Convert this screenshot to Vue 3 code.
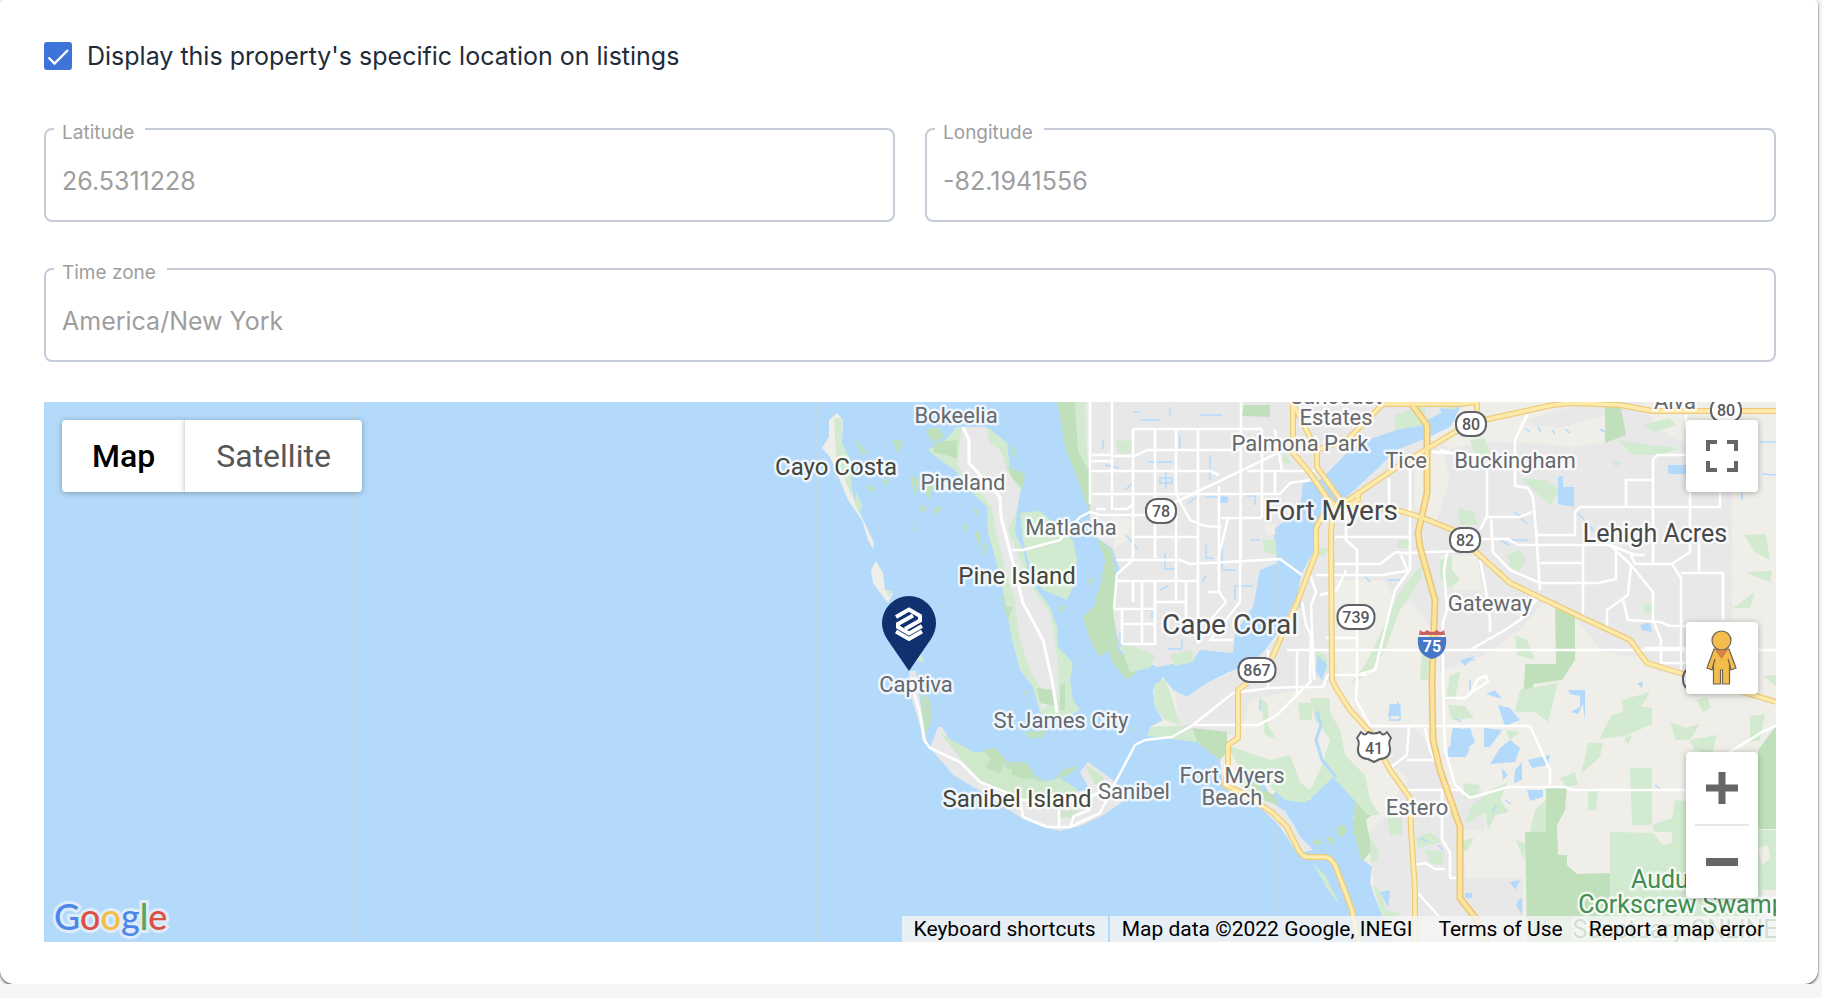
<script setup>
import { ref } from 'vue'

const showLocation = ref(true)
const mapType = ref('map')

const labels = [
  { t: 'Suncoast', x: 1336, y: 404, k: 'town' },
  { t: 'Estates', x: 1336, y: 425, k: 'town' },
  { t: 'Bokeelia', x: 956, y: 423, k: 'town' },
  { t: 'Pineland', x: 963, y: 490, k: 'town' },
  { t: 'Matlacha', x: 1071, y: 535, k: 'town' },
  { t: 'Captiva', x: 916, y: 692, k: 'town' },
  { t: 'St James City', x: 1061, y: 728, k: 'town' },
  { t: 'Sanibel', x: 1134, y: 799, k: 'town' },
  { t: 'Fort Myers', x: 1232, y: 783, k: 'town' },
  { t: 'Beach', x: 1232, y: 805, k: 'town' },
  { t: 'Estero', x: 1417, y: 815, k: 'town' },
  { t: 'Palmona Park', x: 1300, y: 451, k: 'town' },
  { t: 'Tice', x: 1406, y: 468, k: 'town' },
  { t: 'Buckingham', x: 1515, y: 468, k: 'town' },
  { t: 'Gateway', x: 1490, y: 611, k: 'town' },
  { t: 'Alva', x: 1675, y: 409, k: 'town' },
  { t: 'Cayo Costa', x: 836, y: 475, k: 'isle' },
  { t: 'Pine Island', x: 1017, y: 584, k: 'isle' },
  { t: 'Sanibel Island', x: 1017, y: 807, k: 'isle' },
  { t: 'Fort Myers', x: 1331, y: 520, k: 'city' },
  { t: 'Cape Coral', x: 1230, y: 634, k: 'city' },
  { t: 'Lehigh Acres', x: 1655, y: 542, k: 'suburb' },
  { t: 'Audubon', x: 1681, y: 888, k: 'park' },
  { t: 'Corkscrew Swamp', x: 1682, y: 913, k: 'park' },
  { t: 'Sanctuary ONLINE', x: 1675, y: 938, k: 'park' },
]

const shields = [
  { t: '78', x: 1161, y: 511, w: 30 },
  { t: '739', x: 1356, y: 617, w: 37 },
  { t: '867', x: 1257, y: 670, w: 37 },
  { t: '80', x: 1471, y: 424, w: 30 },
  { t: '80', x: 1726, y: 410, w: 30 },
  { t: '82', x: 1465, y: 540, w: 30 },
  { t: '82', x: 1698, y: 679, w: 30 },
]

const highways = [
  'M1293 402V453L1310 473L1327 498L1336 506',
  'M1292 402L1310 437L1317 450V467L1342 502',
  'M1317 450L1347 440L1370 417L1383 404H1460L1477 402V418',
  'M1330 507L1350 499L1397 467L1430 447L1470 423L1553 405L1573 403L1620 405L1653 411H1776',
  'M1345 506L1358 500V492',
  'M1343 505L1397 510L1423 518L1460 533L1477 553L1510 583L1583 618L1630 640L1647 663L1687 675L1776 702',
  'M1335 506L1322 517L1316 528V553L1297 603L1280 640L1272 658M1247 683L1238 690V738L1228 745V767L1225 785L1243 793L1273 813L1287 827L1297 847Q1301 856 1307 857L1325 857Q1333 858 1337 870L1352 910L1355 927L1359 942',
  'M1333 507L1331 533L1332 680L1336 688L1350 710L1370 732L1390 770L1410 798L1411 830L1415 890V942',
]
const interstate = 'M1410 402L1427 425V493L1418 533L1420 547L1435 600L1432 680L1433 740L1440 770L1460 827V898L1477 920L1487 942'

const streets = [
  // Cape Coral grid
  'M1090 402V504M1112 402V510M1133 429V560L1117 574M1155 429V558M1176 429V494L1190 520L1205 526L1221 527M1198 429V644M1155 581V644M1176 516V602M1219 486V592L1226 602L1212 618L1209 634M1241 402V410L1240 602L1210 640H1233',
  'M1133 429H1262M1112 456H1135L1147 450H1240M1092 455H1112M1092 461H1112M1092 471H1210L1219 475M1092 494H1280L1290 483L1310 480M1096 509L1106 509M1114 509H1127L1133 504V494M1133 537H1198M1116 560H1180L1190 564L1280 559L1302 575M1117 581H1198M1155 602H1186M1114 609H1155M1122 624H1155M1122 644H1155V581M1122 609V644M1117 574L1114 609M1133 581V602M1142 581V644M1186 581V624M1247 471H1315M1262 430V494M1275 430L1282 471M1275 471V494M1221 518H1262M1241 518V559M1208 592H1221M1262 494V518M1218 560L1228 518',
  'M1012 550H1023L1060 540L1080 517L1090 512L1100 515H1147L1180 500L1280 452L1317 437',
  // Fort Myers
  'M1346 506V540L1357 550V580M1335 537H1410M1335 564H1380L1396 552L1404 553L1460 551M1316 575H1383L1411 570M1410 465V570M1389 478V505M1357 580V680M1310 575L1316 592L1311 605L1314 680M1302 602L1306 625L1311 635L1310 680M1357 638H1326M1287 650H1776M1320 595L1337 590L1346 570M1401 555L1408 572L1395 590L1385 630L1375 670L1360 674M1432 452L1480 455M1447 553L1444 570L1447 610L1443 622V680L1445 750L1455 785L1470 798',
  'M1193 725H1258L1276 716L1297 695L1312 680M1297 650V695M1268 650V688M1357 680L1356 700L1370 726L1530 726L1550 770V785M1409 727L1407 755L1390 768M1407 760H1434M1425 728L1430 750L1440 770M1444 698H1465L1475 690L1488 682L1486 676L1478 679L1470 695',
  'M1403 790H1460L1470 798L1508 787H1565L1572 790H1690L1730 752L1762 732L1776 726M1442 790V840L1450 852V878H1460M1415 865L1425 863L1435 869H1445M1417 892L1435 912L1450 930',
  // Lehigh Acres
  'M1776 410M1527 415L1515 440V486L1528 488L1533 497L1536 530L1540 590M1487 470V516L1480 530M1487 517H1520L1532 512M1482 539H1508L1518 545H1610L1635 555H1645M1491 519L1493 552L1510 570L1540 583H1598L1616 579V545M1540 563H1583M1537 535H1575V512L1580 507H1720V490M1583 545V618M1626 507V480H1653V460L1657 455H1686M1653 480V564M1690 492V552L1672 564H1635L1630 553M1720 490V507M1610 545L1631 565L1653 592V620L1661 640V663H1686M1631 565L1628 595L1607 610V630M1623 600L1628 620L1660 622L1670 626H1720M1672 564L1681 578V670M1681 573H1723V620M1699 540V573M1645 648H1686V662M1540 595L1520 620L1505 630L1470 650M1480 560L1485 585L1490 620L1490 632M1686 415V430M1460 455L1440 450',
]

const canals = [
  'M1103 440v9M1105 465l14 3M1125 490l8-7M1140 420h20M1160 478h12v5h-12zM1166 471v18M1210 455v25M1148 462h25M1180 435v15M1205 497h16v4M1150 500v9M1188 503l9-6M1126 535l12 14M1133 533v12M1165 553v16h13M1206 545v13h8M1222 545v25h14M1250 540h10M1160 590l8-4M1140 610h12v8M1186 600v12M1206 575l-4 8M1246 496h9v9M1235 600v-14h18M1208 620h8M1120 632v15M1168 649h14v-10M1200 415h22M1170 407v8M1133 412h7',
  'M1365 576l5 6M1388 580h12M1342 625l5-3M1320 670l5-9M1390 705v15h10v-15M1398 702v14M1260 700v11M1370 510l8 7M1300 600v8M1455 718l6 4M1470 680v10M1463 660h12',
  'M1525 428l5 4M1538 427l3 5M1552 430l3 4M1565 429l5 4M1600 429l5 3M1578 513l16 18M1510 540h18M1500 540l9 5M1515 512l12 12M1760 442h16M1742 470v30M1762 474l14 1M1655 785l8 6M1420 838l8 4M1438 845l5 5M1505 800l6 4M1492 812l4-6',
]
</script>

<template>
  <main class="card">
    <label class="toggle">
      <span class="tick">
        <input v-model="showLocation" type="checkbox" />
        <svg v-if="showLocation" viewBox="0 0 28 28" aria-hidden="true">
          <path d="M4.5 15.5L10.5 21.5L24 8" fill="none" stroke="#fff" stroke-width="2.4" />
        </svg>
      </span>
      <span>Display this property's specific location on listings</span>
    </label>

    <div class="fields">
      <div class="field">
        <label for="lat">Latitude</label>
        <input id="lat" type="text" value="26.5311228" disabled />
      </div>
      <div class="field">
        <label for="lng">Longitude</label>
        <input id="lng" type="text" value="-82.1941556" disabled />
      </div>
      <div class="field wide">
        <label for="zone">Time zone</label>
        <input id="zone" type="text" value="America/New York" disabled />
      </div>
    </div>

    <section class="map" aria-label="Map">
      <svg class="canvas" viewBox="44 402 1732 540" preserveAspectRatio="xMidYMid slice">
        <rect x="44" y="402" width="1732" height="540" fill="#b3dafb" />
        <path d="M354.5 402V942M671.5 402V508M816.5 402V942M1276.5 402V942" stroke="#c0daec" fill="none" />

        <!-- mainland -->
        <path fill="#f0eee9" d="M1463 402L1450 427L1427 438L1397 450L1373 473L1347 497L1327 507L1320 523L1313 553L1302 573L1297 597L1280 630L1260 657L1247 665L1227 673L1207 683L1187 697L1173 690L1163 677L1153 690L1155 707L1163 720L1150 727L1148 735L1173 738L1197 742L1220 760L1223 787L1240 797L1260 807L1277 823L1287 837L1297 853L1313 850L1300 837L1293 823L1280 810L1267 800L1280 787L1287 800L1310 800L1320 783L1333 777L1347 790L1357 803L1353 817L1363 833L1360 857L1372 867L1370 883L1377 903L1383 913L1393 942H1776V402Z" />
        <g fill="#e8e8e8">
          <path d="M1064 402L1066 420L1075 450L1083 475L1090 500V520L1097 538L1112 548L1120 570L1112 610L1120 650L1157 667L1193 660L1200 650L1233 653L1235 633L1253 607L1260 570L1277 563L1273 530L1300 510L1303 483L1320 480L1330 470L1347 453L1367 440L1397 430L1427 420L1447 410L1460 402Z" />
          <path d="M1427 438L1400 450L1373 473L1347 497L1327 507L1320 523L1313 553L1302 573L1297 597L1275 640L1250 665L1207 683L1187 697L1176 692L1178 722L1190 730L1240 735L1250 700L1300 690L1340 680L1332 650L1345 585L1385 580L1395 600L1385 625L1410 600L1440 640V672L1485 655L1520 630L1545 600L1590 640L1607 656L1640 656L1660 672L1732 680V498L1735 470L1700 450L1660 430L1640 402H1590L1530 418L1520 430L1500 440L1450 448Z" />
          <path d="M1370 728H1415L1436 755L1445 790L1482 788L1485 830L1460 830L1466 878H1523V942H1393L1377 903L1372 867L1368 835L1385 815L1400 790L1410 780L1385 760L1395 755Z" />
          <path d="M1260 806L1267 800L1285 811L1300 837L1313 850L1297 853L1282 828Z" />
        </g>
        <g fill="#f0eee9">
          <path d="M1460 425L1500 422L1560 428L1605 415V442L1575 447L1530 443L1478 442L1447 450Z" />
          <path d="M1330 580H1385V592L1350 595L1345 650L1330 655Z" />
          <path d="M1113 516L1132 520L1128 540L1114 548ZM1265 525H1275V535H1265ZM1415 450H1442L1450 478L1437 520L1415 510Z" />
          <path d="M1440 555H1477L1482 590L1455 590L1442 580Z" />
          <path d="M1732 430L1776 425V700L1735 690ZM1570 610L1600 650L1640 660L1690 690V730H1440V680L1485 655Z" />
        </g>

        <!-- dense greens -->
        <g fill="#c0e0bc">
          <path d="M1057 402H1075L1078 450L1090 470V515L1078 480L1066 450Z" />
          <path d="M1097 538L1112 550L1116 572L1113 610L1118 650L1137 673L1127 680L1113 663L1100 630L1095 600L1100 587L1105 560Z" />
          <path d="M1100 600L1083 617L1090 640L1100 657L1108 650ZM1244 405H1270V417L1242 416Z" />
          <path d="M1192 728L1227 732V752L1220 760L1197 742ZM1555 600L1575 618V660L1562 680L1525 685V664H1556Z" />
          <path d="M1525 670H1565L1534 676L1532 698H1523ZM1525 832H1546V787H1567L1565 810L1557 825L1558 855H1567V865L1577 874L1610 873V942H1527Z" />
          <path d="M1605 402H1620L1626 435L1605 443ZM1776 726L1758 750V829H1776Z" />
          <path d="M1355 800L1377 810L1366 820L1372 850L1362 862L1353 830ZM1336 828L1344 824L1347 832L1340 838ZM1311 843L1319 838L1322 846ZM1326 836L1334 838L1332 847ZM1240 770L1250 778L1273 795L1280 805L1262 800L1240 785Z" />
        </g>
        <!-- light greens -->
        <g fill="#d2ebd0">
          <path d="M1075 402H1085V420L1088 470L1078 450ZM1118 640L1155 655L1150 668L1130 672ZM1170 655L1192 650L1193 662L1175 666ZM1116 441L1132 440V453L1118 453Z" />
          <path d="M1150 727L1190 725L1197 742L1148 736ZM1154 685L1165 678L1170 692L1180 725L1165 720L1155 707Z" />
          <path d="M1227 745L1270 760L1290 755L1300 782L1310 790L1320 770L1330 740L1315 720L1310 698H1330V712L1340 730L1345 755L1365 775L1370 800L1380 815L1368 815L1345 790L1333 777L1320 790L1305 803L1285 800L1268 785L1240 770Z" />
          <path d="M1260 697L1268 705V725L1277 740L1265 735ZM1298 703H1312V720H1300ZM1285 452L1292 465L1282 462ZM1262 540H1275L1277 555L1265 553ZM1319 548H1329L1325 556H1318Z" />
          <path d="M1397 540V548H1410V540ZM1395 600L1405 585L1425 560L1420 580L1400 610L1385 650L1370 672L1350 685L1365 665L1380 635ZM1315 650L1326 655L1328 670L1320 675ZM1422 650L1430 655L1428 680H1420Z" />
          <path d="M1395 415L1425 405V425L1395 430ZM1440 404L1460 405L1450 412ZM1470 440L1485 438L1490 455H1475ZM1521 478L1545 480L1560 490L1550 505L1535 492ZM1458 508L1474 512L1478 525H1460ZM1507 555L1520 550L1526 560L1518 572L1510 567Z" />
          <path d="M1618 440L1650 445L1680 448L1660 455L1632 455ZM1643 425L1670 418L1676 425L1655 432ZM1612 460L1622 463L1615 467ZM1744 535L1766 534L1770 560L1755 552ZM1745 572L1772 571L1770 582ZM1733 608L1755 592L1750 608ZM1515 635L1527 640L1535 660L1517 655ZM1643 604H1652V613H1644Z" />
          <path d="M1450 675L1460 672L1455 700H1446ZM1448 705L1465 706L1474 718L1452 720ZM1520 690L1558 683L1548 722L1535 712L1515 712ZM1506 730L1520 732L1510 740ZM1622 700L1650 692L1635 718L1625 725ZM1599 739L1612 715L1640 706L1652 708V724L1625 736ZM1588 743H1603L1600 757L1581 774ZM1624 738L1632 735L1628 745ZM1670 722L1685 728L1700 724L1690 740L1676 740ZM1690 740L1717 735L1712 755L1694 750ZM1750 716L1765 714L1760 740L1750 742ZM1696 700L1707 697L1711 708L1703 712ZM1763 676L1776 675V686Z" />
          <path d="M1630 768H1652V825H1632ZM1588 790H1598L1596 810H1588ZM1560 778L1575 772L1578 785L1566 787ZM1610 832L1655 833L1652 825L1672 818L1675 800L1690 802V830H1776V942H1610ZM1535 810L1546 800V832H1530ZM1516 840L1525 843L1524 860ZM1463 783L1480 785L1475 800L1465 798ZM1490 790L1508 782L1500 800L1509 812L1496 815L1488 830L1485 812L1465 825L1470 808Z" />
          <path d="M1387 816L1402 818V835H1390ZM1416 838L1430 832L1442 842L1418 848ZM1425 850L1445 852L1442 865L1430 863ZM1456 842L1474 838L1466 852ZM1373 885L1380 890L1386 910L1400 913L1390 925L1380 910ZM1313 863L1325 875L1340 905L1328 890ZM1371 838L1378 850V862H1370ZM1440 560L1452 555V570L1460 580L1450 588L1440 578Z" />
        </g>
        <path fill="#e8e8e8" d="M1433 553H1440V590H1433Z" />
        <path fill="#f0eee9" d="M1652 832H1672V843L1662 845ZM1758 848L1768 845L1770 858L1762 866ZM1762 890H1776V925H1762Z" />

        <!-- lakes -->
        <g fill="#b3dafb">
          <path d="M1456 410L1440 408L1444 430L1455 420ZM1558 477L1563 476V487H1574V507L1558 504ZM1668 465H1690V474H1668ZM1568 690H1585V722L1583 704L1578 714L1571 712L1580 707V696L1570 694ZM1486 694L1495 690L1502 699ZM1498 705L1510 708L1520 720L1505 726ZM1484 728L1502 730L1490 747H1484ZM1452 730L1470 728L1475 742L1465 750L1450 748ZM1500 748L1510 740L1520 748L1515 762L1490 764ZM1515 770L1522 762V780L1514 783ZM1502 768L1508 775L1503 780ZM1528 760L1550 755L1548 765L1532 768ZM1527 790L1543 790V797L1530 801ZM1448 750L1470 748L1466 757L1450 757ZM1453 728H1460V745H1453ZM1460 660L1475 656L1465 666ZM1640 625L1650 622L1652 632L1642 630ZM1637 684L1643 681L1642 688ZM1510 882L1520 880L1515 890ZM1518 900L1522 898V915L1516 905ZM1465 893H1472V898H1465Z" />
          <path d="M1317 655L1327 665L1322 680L1316 672ZM1390 704H1400V716H1388ZM1448 747H1460V757H1448ZM1235 768L1260 778L1258 785L1240 779ZM1380 892L1390 890L1388 908ZM1257 775L1268 790L1262 792ZM1220 495L1228 497V503L1220 503Z" />
        </g>
        <path d="M1317 712L1321 725L1316 740L1322 760L1336 777" stroke="#b3dafb" stroke-width="3" fill="none" />
        <path v-for="(c, i) in canals" :key="'c' + i" :d="c" fill="none" stroke="#b3dafb" stroke-width="1.5" />

        <!-- islands -->
        <path fill="#f0eee9" d="M837 413L843 420L842 443L847 473L855 503L868 530L874 543L873 549L868 540L862 520L848 500L837 473L830 457L822 448L829 437V420ZM876 561L883 573L885 590L893 593L888 603L873 583L871 570Z" />
        <path fill="#d2ebd0" d="M834 418L842 418L842 443L850 460L852 498L845 480L836 455ZM856 492L862 505L861 512L855 505ZM883 580L886 590L893 591L888 597ZM918 650L925 662L915 660Z" />
        <path fill="#d2ebd0" d="M957 427H987L1007 443L1010 470L1022 472V485L1017 510L1015 533L1023 550L1030 580L1050 607L1057 627L1058 647L1073 663L1070 680L1073 700L1080 710L1060 720L1040 713L1033 687L1020 670L1012 640L1005 600L996 560L988 533L987 507L970 490L955 470L940 460L928 450L945 440Z" />
        <path fill="#e8e8e8" d="M962 427H985L998 442L1007 470L1020 490L1017 510L1008 530L1020 560L1032 588L1048 610L1053 627L1058 665V700L1040 710L1042 690L1030 670L1020 640L1015 600L1005 570L998 540L992 508L975 485L957 465Z" />
        <path fill="#d2ebd0" d="M1020 513L1040 511L1073 540L1077 560L1073 587L1067 600L1043 590L1030 567L1023 540ZM987 430L1007 443V455L990 443Z" />
        <path fill="#c0e0bc" d="M935 442L957 440V458L933 452ZM926 430L938 427L945 437L932 442ZM1007 466L1025 474L1022 488L1012 478ZM1037 688L1054 690V706L1040 703ZM1060 685L1065 684V710H1060Z" />
        <g fill="#bfe0c3">
          <path d="M852 438L868 452L862 455ZM892 440L903 441L898 454ZM882 478L890 480L884 486ZM865 485L876 488L872 493ZM910 475L920 480L915 496ZM922 483L935 485L928 500ZM918 506L927 507L924 514ZM934 508L943 507L935 517ZM912 523L918 533L914 530ZM974 507L980 512L975 517ZM963 525L968 523L965 535ZM975 530L982 535L978 548ZM982 545L987 542L985 558ZM1000 595L1005 600L1002 607ZM1003 605L1013 607L1008 620ZM1010 445L1016 450L1014 460ZM1060 605L1067 608L1058 613ZM1088 580L1095 577L1090 587Z" />
          <path d="M922 695L930 698L932 720L925 735L922 715ZM1022 692L1027 690L1025 697ZM1025 732L1046 730L1042 738H1028ZM984 752L996 748L1007 762L1025 762L1035 775L1050 785L1030 778L1010 776L995 766ZM1052 782L1065 768L1080 766L1068 775ZM1130 730L1135 726L1132 733Z" />
        </g>
        <path fill="#e8e8e8" d="M909 671H916L920 700L926 738L930 748L938 727L942 727L960 758L985 780L1040 795L1090 790L1080 772L1088 762L1110 778L1130 797L1100 817L1080 826L1060 831L1040 826L1020 817L987 795L953 775L925 742L912 700Z" />
        <path fill="#cfe8cb" d="M940 733L973 752L993 752L1007 768L1040 782L1060 778L1078 790L1070 800L1040 803L1000 792L980 780L962 760ZM1085 764L1105 778L1095 785ZM1058 811L1080 810L1070 818L1060 817Z" />
        <path fill="#c0e0bc" d="M982 750L995 748L1006 760L1000 774L986 768L990 758ZM1012 765L1026 763L1034 772L1028 780L1012 775Z" />

        <!-- roads -->
        <g fill="none" stroke="#fff" stroke-width="2.5" stroke-linejoin="round">
          <path v-for="(s, i) in streets" :key="'s' + i" :d="s" />
          <path d="M963 427L969 440V463L1000 497L1001 517L1013 563L1023 603L1043 640L1052 680L1057 713" stroke-width="3" />
          <path d="M913 690L920 713L924 740L930 748L960 762L980 782L1020 798L1023 817L1047 827H1070L1100 813L1115 783L1135 745L1145 740L1172 737L1193 725L1233 693L1270 688L1297 687H1323L1328 675H1367M1059 810V827M1020 800L1085 800L1110 786M1070 827L1074 816L1090 810" />
        </g>
        <g fill="none" stroke-linejoin="round">
          <path v-for="(h, i) in highways" :key="'a' + i" :d="h" stroke="#eecb7c" stroke-width="6" />
          <path :d="interstate" stroke="#ecc477" stroke-width="7" />
          <path v-for="(h, i) in highways" :key="'b' + i" :d="h" stroke="#fdebab" stroke-width="3.5" />
          <path :d="interstate" stroke="#fbe49c" stroke-width="4" />
        </g>

        <!-- route shields -->
        <g v-for="(s, i) in shields" :key="'r' + i">
          <rect :x="s.x - s.w / 2" :y="s.y - 12" :width="s.w" height="24" rx="11" fill="#fff" stroke="#5f6368" stroke-width="2" />
          <text class="route" :x="s.x" :y="s.y + 6">{{ s.t }}</text>
        </g>
        <path fill="#fff" stroke="#5f6368" stroke-width="2" stroke-linejoin="round" d="M1361 732Q1365 737 1368 732Q1374 735 1380 732Q1383 737 1387 732L1391 738Q1388 742 1390 748Q1391 758 1380 759L1374 762L1368 759Q1357 758 1358 748Q1360 742 1357 738Z" />
        <text class="route" x="1374" y="754">41</text>
        <path fill="#c9625e" d="M1419 635L1420 630Q1424 634 1427 630Q1432 634 1437 630Q1440 634 1444 630L1445 635Z" />
        <path fill="#4577c4" d="M1418 637H1446Q1448 655 1432 659Q1416 655 1418 637Z" />
        <text class="route inter" x="1432" y="652">75</text>

        <text v-for="l in labels" :key="l.t + l.y" :class="['place', l.k]" :x="l.x" :y="l.y">{{ l.t }}</text>

        <!-- property marker -->
        <path fill="#10316f" d="M909 671L887 639Q882 631 882 623A27 27 0 0 1 936 623Q936 631 931 639Z" />
        <g fill="none" stroke="#fff" stroke-width="4">
          <path d="M896 617L909 609.5L920 616V620.5L905 629" />
          <path d="M913 615.5L898 624V627L909 633.5L922 626" />
          <path d="M896 631.500L909 639L922 631.500" />
        </g>
      </svg>

      <div class="types">
        <button type="button" :class="{ on: mapType === 'map' }" @click="mapType = 'map'">Map</button>
        <button type="button" :class="{ on: mapType === 'satellite' }" @click="mapType = 'satellite'">Satellite</button>
      </div>

      <button class="tool full" type="button" aria-label="Toggle fullscreen view">
        <svg viewBox="0 0 32 32" width="32" height="32" fill="none" stroke="#666" stroke-width="4">
          <path d="M2 11V2H11M21 2H30V11M30 21V30H21M11 30H2V21" />
        </svg>
      </button>

      <div class="side">
        <button class="tool" type="button" aria-label="Street View">
          <svg viewBox="0 0 32 56" width="32" height="56" fill="#f4bd4b" stroke="#6b6456" stroke-width="1.2">
            <path d="M8 19H23L30 38L25 40L23.5 34V54H16.500V40H14.500V54H7.500V34L6 40L1 38Z" />
            <circle cx="15.500" cy="10.500" r="9.500" />
            <path d="M9 20H22L15.500 29Z" fill="#d58242" stroke="none" />
            <path d="M7.500 34L9 29M23.500 34L22 29" />
          </svg>
        </button>
        <div class="zoom">
          <button type="button" aria-label="Zoom in">
            <svg viewBox="0 0 32 32" width="32" height="32"><path d="M12.500 0H19.500V12.500H32V19.500H19.500V32H12.500V19.500H0V12.500H12.500Z" fill="#666" /></svg>
          </button>
          <button type="button" aria-label="Zoom out">
            <svg viewBox="0 0 32 32" width="32" height="32"><path d="M0 12H32V20H0Z" fill="#666" /></svg>
          </button>
        </div>
      </div>

      <a class="brand" href="#" aria-label="Google"><span class="b">G</span><span class="r">o</span><span class="y">o</span><span class="b">g</span><span class="g">l</span><span class="r">e</span></a>

      <div class="credits">
        <button type="button">Keyboard shortcuts</button>
        <div class="legal">
          <span>Map data ©2022 Google, INEGI</span>
          <a href="#">Terms of Use</a>
          <a href="#">Report a map error</a>
        </div>
      </div>
    </section>
  </main>
</template>

<style>
body {
  margin: 0;
  background: #f4f5f7;
}
</style>

<style scoped>
.card {
  margin-right: 4px;
  padding: 42px 42px 42px 44px;
  background: #fff;
  border-radius: 4px 4px 14px 14px;
  box-shadow: 0 1px 2px rgba(0, 0, 0, 0.5), 0 2px 3px rgba(0, 0, 0, 0.3);
  font-family: Inter, sans-serif;
}
.toggle {
  display: flex;
  align-items: center;
  gap: 15px;
  height: 28px;
  font-size: 25px;
  line-height: 28px;
  color: #212b3a;
}
.tick {
  display: grid;
  flex: none;
}
.tick > * {
  grid-area: 1 / 1;
  width: 28px;
  height: 28px;
}
.tick input {
  appearance: none;
  margin: 0;
  border: 2px solid #3d74d9;
  border-radius: 3px;
}
.tick input:checked {
  background: #3d74d9;
}
.tick svg {
  pointer-events: none;
}
.fields {
  display: grid;
  grid-template-columns: 1fr 1fr;
  gap: 46px 30px;
  margin: 58px 0 40px;
}
.field {
  position: relative;
}
.wide {
  grid-column: 1 / -1;
}
.field label {
  position: absolute;
  top: -6px;
  left: 10px;
  padding: 0 11px 0 8px;
  background: #fff;
  font-size: 19px;
  line-height: 22px;
  color: #9e9e9e;
}
.field input {
  display: block;
  box-sizing: border-box;
  width: 100%;
  height: 94px;
  padding: 12px 16px 0;
  border: 2px solid #c5ccd8;
  border-radius: 8px;
  background: #fff;
  font: 25px Inter, sans-serif;
  color: #9e9e9e;
}
.map {
  position: relative;
  height: 540px;
  overflow: hidden;
  font-family: Roboto, sans-serif;
}
.canvas {
  display: block;
  width: 100%;
  height: 100%;
}
.place {
  text-anchor: middle;
  paint-order: stroke;
  stroke: rgba(255, 255, 255, 0.75);
  stroke-width: 5px;
  stroke-linejoin: round;
  font-size: 22px;
  fill: #66696e;
}
.isle {
  font-size: 24px;
  fill: #43453a;
}
.city {
  font-size: 28px;
  fill: #46484b;
}
.suburb {
  font-size: 25px;
  fill: #46484b;
}
.park {
  font-size: 25px;
  fill: #458c52;
}
.route {
  text-anchor: middle;
  font-size: 16px;
  font-weight: 500;
  fill: #55585c;
}
.inter {
  fill: #fff;
  font-weight: 700;
}
.map button {
  border: 0;
  padding: 0;
  background: #fff;
  font-family: inherit;
  cursor: pointer;
}
.types,
.tool,
.zoom {
  border-radius: 4px;
  box-shadow: 0 1px 6px rgba(0, 0, 0, 0.3);
}
.map .tool {
  border-radius: 4px;
}
.types {
  position: absolute;
  top: 18px;
  left: 18px;
  display: flex;
  overflow: hidden;
}
.map .types button {
  height: 72px;
  padding: 0 30px;
  font-size: 32px;
  color: #565656;
}
.map .types button + button {
  padding: 0 31px;
  box-shadow: 0 0 6px rgba(0, 0, 0, 0.3);
}
.map .types .on {
  font-weight: 500;
  color: #000;
}
.tool,
.zoom button {
  display: flex;
  align-items: center;
  justify-content: center;
  width: 72px;
  height: 72px;
}
.full {
  position: absolute;
  top: 18px;
  right: 18px;
}
.side {
  position: absolute;
  right: 18px;
  bottom: 44px;
  display: grid;
  gap: 58px;
}
.zoom {
  display: grid;
  justify-items: center;
  background: #fff;
}
.map .zoom button {
  background: transparent;
}
.map .zoom button + button {
  width: 54px;
  height: 74px;
  border-top: 2px solid #e6e6e6;
}
.brand {
  position: absolute;
  left: 10px;
  bottom: 4px;
  font: 500 36px/44px Lato, sans-serif;
  text-decoration: none;
  paint-order: stroke;
  -webkit-text-stroke: 6px #deecf9;
}
.b {
  color: #4f86ec;
}
.r {
  color: #dc5040;
}
.y {
  color: #f5bd41;
}
.g {
  color: #58a55d;
}
.credits {
  position: absolute;
  right: 0;
  bottom: 0;
  display: flex;
  gap: 2px;
}
.map .credits button,
.legal {
  height: 26px;
  padding: 0 12px;
  background: rgba(245, 245, 245, 0.8);
  font-size: 21px;
  line-height: 26px;
  color: #000;
}
.legal {
  display: flex;
  gap: 26px;
}
.legal a {
  color: inherit;
  text-decoration: none;
}
</style>
